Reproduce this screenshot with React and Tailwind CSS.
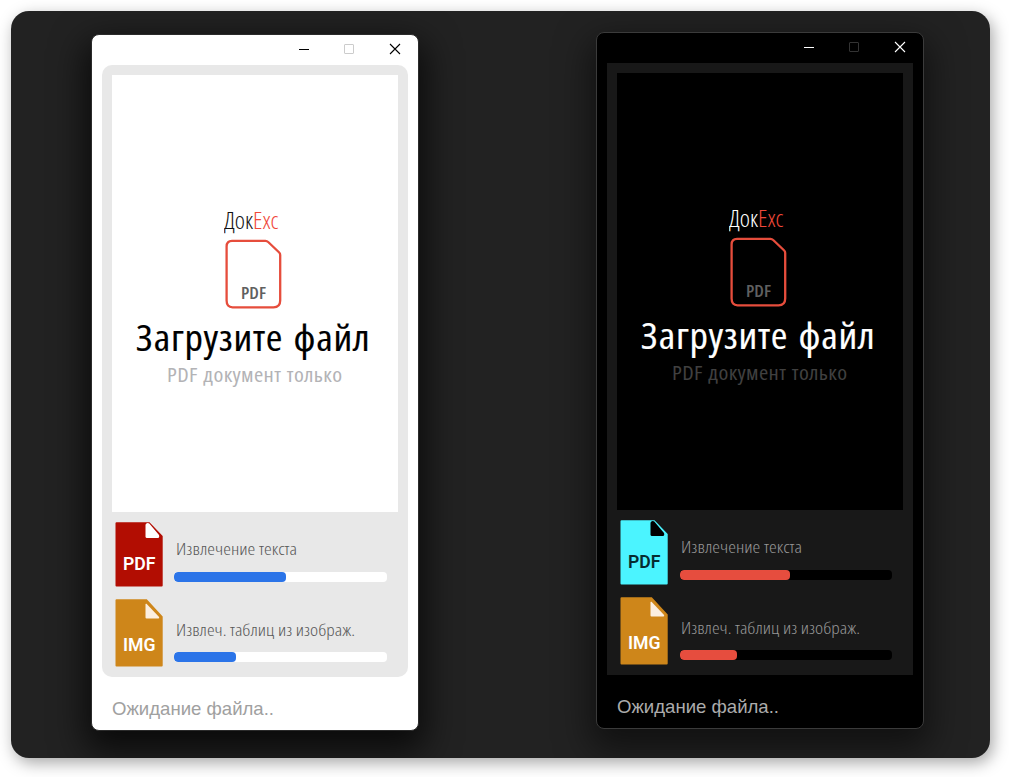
import { useLayoutEffect, useRef, useState } from 'react';

// Condenses a single line of text to the given width.
function FitText({ width, className, children }) {
  const ref = useRef(null);
  const [scale, setScale] = useState(1);
  useLayoutEffect(() => {
    setScale(width / ref.current.getBoundingClientRect().width);
  }, []);
  return (
    <div className={className} style={{ width }}>
      <span ref={ref} className="inline-block origin-left whitespace-nowrap" style={{ transform: `scaleX(${scale})` }}>
        {children}
      </span>
    </div>
  );
}

const light = {
  window: 'bg-white border-[#2b2b2b] shadow-[0_14px_34px_6px_rgba(0,0,0,0.7)]',
  offset: 'mt-[23px]',
  minimize: '#000000',
  maximize: '#cccccc',
  panel: 'bg-[#e8e8e8] rounded-[10px]',
  drop: 'bg-white',
  brand: 'text-[#111111]',
  badge: 'text-[#606060]',
  title: 'text-black',
  hint: 'text-[#b3b3b6]',
  label: 'text-[#585858]',
  track: 'bg-white ml-[-2px] w-[213px]',
  fill: 'bg-[#2b74e8]',
  status: 'text-[#a0a0a0]',
  pdf: { body: '#b20d02', fold: '#ffffff', text: 'text-white' },
  textFill: 112,
  imageFill: 62,
};

const dark = {
  window: 'bg-black border-[#3b3b3b] shadow-[0_14px_34px_6px_rgba(0,0,0,0.5)]',
  offset: 'mt-[21px]',
  minimize: '#ffffff',
  maximize: '#333333',
  panel: 'bg-[#181818]',
  drop: 'bg-black',
  brand: 'text-white',
  badge: 'text-[#606060]',
  title: 'text-white',
  hint: 'text-[#404040]',
  label: 'text-[#969696]',
  track: 'bg-black ml-[-1px] w-[212px]',
  fill: 'bg-[#e64d3e]',
  status: 'text-[#acacac]',
  pdf: { body: '#4bf4ff', fold: '#000000', text: 'text-[#062c30]' },
  textFill: 110,
  imageFill: 57,
};

const img = { body: '#ce861a', fold: '#fcefe0', text: 'text-white' };

function TitleBar({ t }) {
  return (
    <div className="flex h-[30px] shrink-0 items-start justify-end pr-4 pt-2">
      <svg width="103" height="12" viewBox="0 0 103 12" fill="none">
        <path d="M0 6.5h10" stroke={t.minimize} />
        <rect x="45.5" y="1.5" width="9" height="9" rx=".5" stroke={t.maximize} />
        <path d="M91 1l10 10M101 1L91 11" stroke={t.minimize} strokeWidth="1.1" />
      </svg>
    </div>
  );
}

function DropArea({ t }) {
  return (
    <div className={`flex h-[437px] flex-col font-["Open_Sans","Noto_Sans",sans-serif] ${t.drop}`}>
      <FitText width={54.5} className={`ml-[112px] mt-[129px] h-[35px] text-[24px] font-light leading-[32px] [font-stretch:75%] ${t.brand}`}>
        Док<span className="text-[#f0483a]">Ехс</span>
      </FitText>
      <div className="ml-[113px] grid h-[70px] w-[57px]">
        <svg className="col-start-1 row-start-1" width="57" height="70" viewBox="0 0 57 70" fill="none">
          <path
            d="M7 1.8H40.5Q42 1.8 43.2 3L54.2 13.5Q55.2 14.5 55.2 16V61.5Q55.2 68.3 48.5 68.3H7.5Q1.6 68.3 1.6 61.5V7.5Q1.6 1.8 7 1.8Z"
            stroke="#e64d3c"
            strokeWidth="2.3"
          />
        </svg>
        <FitText width={25} className={`col-start-1 row-start-1 ml-[16px] mt-[44px] h-5 text-[15.5px] font-semibold leading-5 [font-stretch:75%] ${t.badge}`}>
          PDF
        </FitText>
      </div>
      <FitText width={234.5} className={`ml-6 mt-[2px] h-[53px] text-[35.5px] font-normal leading-[52px] tracking-[0.6px] [-webkit-text-stroke:0.15px] [font-stretch:87%] [word-spacing:2px] ${t.title}`}>
        Загрузите файл
      </FitText>
      <FitText width={175.5} className={`ml-[55px] mt-[-3px] h-7 text-[20px] leading-7 tracking-[0.3px] [font-stretch:87%] [word-spacing:1px] ${t.hint}`}>
        PDF документ только
      </FitText>
    </div>
  );
}

function FileIcon({ label, colors, height }) {
  const tall = height > 66;
  return (
    <div className="grid w-[48px]" style={{ height }}>
      <svg className="col-start-1 row-start-1" width="48" height={height} viewBox={`0 0 48 ${height}`}>
        <path d={`M1.5 0.3H${tall ? 31.8 : 34.5}L47.7 ${tall ? 17.5 : 14}V${height - 1.5}q0 1-1 1H1.5q-1 0-1-1V1.3q0-1 1-1Z`} fill={colors.body} />
        <path
          d={tall ? 'M31.5 4.8l12.6 13.2q.5 1.5-1 1.5H31.6q-1.1 0-1.1-1.1V5.5q0-1.2 1-.7Z' : 'M31.8 1.2q1.5-.5 2.5.4L44 13q.8 2.7-1 2.9H31.6q-1.1 0-1.1-1.1V3q0-1.4 1.3-1.8Z'}
          fill={colors.fold}
        />
      </svg>
      <FitText width={32.5} className={`z-10 col-start-1 row-start-1 ml-[7.5px] self-end text-[18.5px] font-[Roboto,sans-serif] font-semibold leading-6 ${tall ? 'pb-[10px]' : 'pb-[11px]'} ${colors.text}`}>
        {label}
      </FitText>
    </div>
  );
}

function ProgressBar({ t, value }) {
  return (
    <div className={`h-[10px] overflow-hidden rounded-[4px] ${t.track}`}>
      <div className={`h-full rounded-[4px] ${t.fill}`} style={{ width: value }} />
    </div>
  );
}

function AppWindow({ t }) {
  const label = `font-["Open_Sans","Noto_Sans",sans-serif] text-[16.5px] leading-6 font-light [font-stretch:75%] ${t.label}`;
  return (
    <div className={`flex h-[697px] w-[328px] flex-col rounded-[8px] border ${t.window} ${t.offset}`}>
      <TitleBar t={t} />
      <div className={`mx-[10px] flex h-[612px] shrink-0 flex-col p-[10px] ${t.panel}`}>
        <DropArea t={t} />
        <div className="ml-[3px] mt-[10px] flex gap-[13px]">
          <FileIcon label="PDF" colors={t.pdf} height={65} />
          <div className="pt-[15px]">
            <FitText width={121} className={`mb-[11px] h-6 ${label}`}>Извлечение текста</FitText>
            <ProgressBar t={t} value={t.textFill} />
          </div>
        </div>
        <div className="ml-[3px] mt-[12px] flex gap-[13px]">
          <FileIcon label="IMG" colors={img} height={68} />
          <div className="pt-[19px]">
            <FitText width={179} className={`mb-[10px] h-6 ${label}`}>Извлеч. таблиц из изображ.</FitText>
            <ProgressBar t={t} value={t.imageFill} />
          </div>
        </div>
      </div>
      <FitText width={162} className={`ml-5 mt-[18px] font-["Liberation_Sans",Arial,sans-serif] text-[19px] leading-7 ${t.status}`}>
        Ожидание файла..
      </FitText>
    </div>
  );
}

export default function App() {
  return (
    <main className="h-[777px] w-[1009px] overflow-hidden bg-white p-[11px]">
      <div className="flex h-[747px] w-[979px] items-start gap-[177px] overflow-hidden rounded-[18px] bg-[#222222] pl-20 shadow-[3px_5px_16px_rgba(0,0,0,0.35)]">
        <AppWindow t={light} />
        <AppWindow t={dark} />
      </div>
    </main>
  );
}
